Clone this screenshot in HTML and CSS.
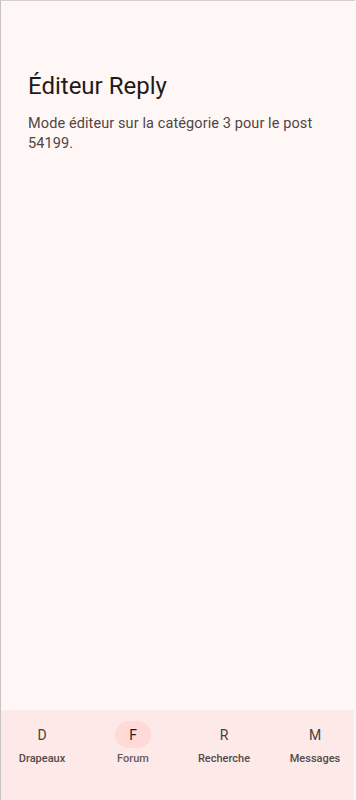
FILE: index.html
```html
<!DOCTYPE html>
<html lang="fr">
<head>
<meta charset="utf-8">
<meta name="viewport" content="width=device-width, initial-scale=1">
<title>Éditeur Reply</title>
<link rel="stylesheet" href="styles.css">
</head>
<body>
<div class="app">
  <main class="content">
    <h1 class="title">Éditeur Reply</h1>
    <p class="desc">Mode éditeur sur la catégorie 3 pour le post 54199.</p>
  </main>
  <nav class="nav">
    <div class="item"><span class="icon">D</span><span class="label">Drapeaux</span></div>
    <div class="item active"><span class="icon">F</span><span class="label">Forum</span></div>
    <div class="item"><span class="icon">R</span><span class="label">Recherche</span></div>
    <div class="item"><span class="icon">M</span><span class="label">Messages</span></div>
  </nav>
</div>
</body>
</html>
```
FILE: styles.css
```css
html, body {
  margin: 0;
  padding: 0;
  height: 100%;
}
body {
  font-family: Roboto, "Noto Sans", "Liberation Sans", sans-serif;
  background: #fff7f5;
}
.app {
  box-sizing: border-box;
  height: 800px;
  display: flex;
  flex-direction: column;
  border-left: 1px solid #c8c4c4;
  border-top: 1px solid #d4d0d0;
  border-right: 2px solid #fbfafa;
  overflow: hidden;
}
.content {
  flex: 1;
  padding: 70px 27px 0 27px;
}
.title {
  margin: 0;
  font-size: 24px;
  font-weight: 400;
  line-height: 30px;
  color: #1f1a1a;
}
.desc {
  margin: 13px 0 0 0;
  font-size: 14.5px;
  line-height: 20px;
  letter-spacing: 0.1px;
  color: #4f4545;
}
.nav {
  height: 90px;
  background: #fde9e8;
  display: grid;
  grid-template-columns: repeat(4, 91px);
  justify-content: center;
  padding-top: 11px;
  padding-left: 2px;
  box-sizing: border-box;
}
.item {
  display: flex;
  flex-direction: column;
  align-items: center;
}
.icon {
  width: 36px;
  height: 27px;
  border-radius: 14px;
  display: flex;
  align-items: center;
  justify-content: center;
  font-size: 14px;
  color: #4a4040;
}
.active .icon {
  background: #ffdad7;
  color: #2c1f1f;
}
.label {
  margin-top: 4px;
  font-size: 11px;
  font-weight: 500;
  line-height: 14px;
  color: #564a4a;
}
.active .label {
  color: #6a5c5c;
}
```
